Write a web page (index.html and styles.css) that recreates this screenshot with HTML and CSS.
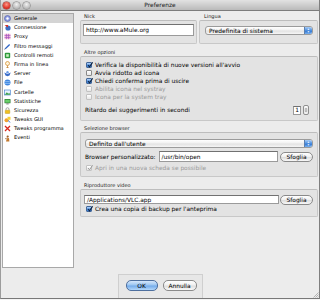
FILE: index.html
```html
<!DOCTYPE html>
<html lang="it">
<head>
<meta charset="utf-8">
<title>Preferenze</title>
<link rel="stylesheet" href="styles.css">
</head>
<body>
<div class="window">
  <div class="titlebar">
    <div class="lights"><span class="light red"></span><span class="light gray"></span><span class="light gray"></span></div>
    <div class="title">Preferenze</div>
    <div class="spacer"></div>
  </div>
  <div class="main">
    <ul class="sidebar">
      <li class="item sel"><svg viewBox="0 0 7 7"><circle cx="3.5" cy="3.5" r="3" fill="#8d9be0" stroke="#4a56a8" stroke-width=".6"/><circle cx="3.5" cy="3.5" r="1.2" fill="#fff"/></svg><span>Generale</span></li>
      <li class="item"><svg viewBox="0 0 7 7"><circle cx="4" cy="4" r="2.6" fill="#3f6fc4"/><path d="M0.5 1 L4 1 L4 3.5 Z" fill="#d8322a"/></svg><span>Connessione</span></li>
      <li class="item"><svg viewBox="0 0 7 7"><rect x="0.5" y="0.8" width="6" height="5.4" fill="#f2b5d8"/><path d="M0.5 2.5H6.5M0.5 4.5H6.5M2.5 .8V6.2M4.5 .8V6.2" stroke="#9a4fc0" stroke-width=".6"/></svg><span>Proxy</span></li>
      <li class="item"><svg viewBox="0 0 7 7"><path d="M1 6.3 L1.6 4.6 L5.2 1 L6.1 1.9 L2.5 5.5 Z" fill="#2c64c8"/><path d="M0.6 6.6 L1.6 4.9" stroke="#1a3a7a" stroke-width=".6"/></svg><span>Filtro messaggi</span></li>
      <li class="item"><svg viewBox="0 0 7 7"><rect x="0.8" y="0.8" width="5.4" height="5.4" rx="1" fill="#2f9a3c"/><rect x="2.2" y="2.2" width="2.6" height="2.6" fill="#c9f0c0"/></svg><span>Controlli remoti</span></li>
      <li class="item"><svg viewBox="0 0 7 7"><circle cx="3.5" cy="2.5" r="2" fill="#fff3d8" stroke="#d08a2a" stroke-width=".7"/><path d="M3.5 4.5V6.7M2.4 6.5H4.6" stroke="#c07a20" stroke-width=".7"/></svg><span>Firma in linea</span></li>
      <li class="item"><svg viewBox="0 0 7 7"><path d="M0.3 2.5 L3.5 4 L6.7 2.5 L5.5 5.5 L3.5 6.3 L1.5 5.5 Z" fill="#3a6cc8"/><circle cx="3.5" cy="2.2" r="1.2" fill="#6a9be6"/></svg><span>Server</span></li>
      <li class="item"><svg viewBox="0 0 7 7"><circle cx="3.5" cy="3.5" r="3" fill="#3f86e0"/><path d="M1.2 2.5C2.5 3 4 2 5.8 2.8M1 4.3C2.7 4.8 4.4 4 6 4.6" stroke="#bfe0ff" stroke-width=".6" fill="none"/></svg><span>File</span></li>
      <li class="item"><svg viewBox="0 0 7 7"><rect x="0.5" y="1" width="6" height="5" fill="#e8f2ff" stroke="#3b78c8" stroke-width=".6"/><path d="M0.8 5.7 L2.8 3.2 L4.3 4.8 L5.3 3.8 L6.2 5.7 Z" fill="#3aa04a"/></svg><span>Cartelle</span></li>
      <li class="item"><svg viewBox="0 0 7 7"><rect x="0.5" y="1" width="6" height="4.3" rx=".5" fill="#2f7d36"/><rect x="1.2" y="1.7" width="4.6" height="2.9" fill="#6ad06a"/><rect x="2.3" y="5.4" width="2.4" height="1" fill="#777"/></svg><span>Statistiche</span></li>
      <li class="item"><svg viewBox="0 0 7 7"><path d="M2 3.2V2.2A1.5 1.5 0 0 1 5 2.2V3.2" stroke="#8a8a8a" stroke-width=".7" fill="none"/><rect x="1.2" y="3.2" width="4.6" height="3.3" rx=".4" fill="#f0c020" stroke="#b08a10" stroke-width=".4"/></svg><span>Sicurezza</span></li>
      <li class="item"><svg viewBox="0 0 7 7"><circle cx="2.5" cy="4.3" r="2" fill="#f0a030"/><rect x="3.5" y="0.8" width="3" height="3" fill="#f4d23a"/><path d="M4 4.5 L6.3 6.5" stroke="#3a6cc8" stroke-width=".9"/></svg><span>Tweaks GUI</span></li>
      <li class="item"><svg viewBox="0 0 7 7"><path d="M1 1 L6 6 M6 1 L1 6" stroke="#d8281e" stroke-width="1.3"/></svg><span>Tweaks programma</span></li>
      <li class="item"><svg viewBox="0 0 7 7"><circle cx="3.7" cy="1.6" r="1.1" fill="#a0602a"/><path d="M2 6.5 L2.8 3.2 L5 3 L5.4 6.5 Z" fill="#c2792e"/><path d="M1 3.8 L2.8 3.2" stroke="#7a4520" stroke-width=".6"/></svg><span>Eventi</span></li>
    </ul>

    <div class="content">
      <div class="toprow">
        <div class="group nick">
          <div class="glabel">Nick</div>
          <div class="gbox">
            <div class="field big">http://www.aMule.org</div>
          </div>
        </div>
        <div class="group lingua">
          <div class="glabel">Lingua</div>
          <div class="gbox">
            <div class="popup"><span>Predefinita di sistema</span><span class="arrows"><svg viewBox="0 0 8 9"><path d="M2.5 3.6 L4 1.8 L5.5 3.6 Z M2.5 5.4 L4 7.2 L5.5 5.4 Z" fill="#fff"/></svg></span></div>
          </div>
        </div>
      </div>

      <div class="group altre">
        <div class="glabel">Altre opzioni</div>
        <div class="gbox">
          <div class="cbrow"><span class="cb on"><svg viewBox="0 0 6 6"><path d="M1 3 L2.5 4.8 L5.6 0.3" stroke="#0f2340" stroke-width="1.1" fill="none"/></svg></span><span>Verifica la disponibilità di nuove versioni all'avvio</span></div>
          <div class="cbrow"><span class="cb"></span><span>Avvia ridotto ad icona</span></div>
          <div class="cbrow"><span class="cb on"><svg viewBox="0 0 6 6"><path d="M1 3 L2.5 4.8 L5.6 0.3" stroke="#0f2340" stroke-width="1.1" fill="none"/></svg></span><span>Chiedi conferma prima di uscire</span></div>
          <div class="cbrow dis"><span class="cb"></span><span>Abilita icona nel systray</span></div>
          <div class="cbrow dis"><span class="cb"></span><span>Icona per la system tray</span></div>
          <div class="ritardo"><span>Ritardo dei suggerimenti in secondi</span>
            <span class="spin"><span class="spinval">1</span><span class="stepper"><svg viewBox="0 0 6 10"><path d="M1.6 4 L3 2.2 L4.4 4 Z M1.6 6 L3 7.8 L4.4 6 Z" fill="#333"/></svg></span></span>
          </div>
        </div>
      </div>

      <div class="group browser">
        <div class="glabel">Selezione browser</div>
        <div class="gbox">
          <div class="popup"><span>Definito dall'utente</span><span class="arrows"><svg viewBox="0 0 8 9"><path d="M2.5 3.6 L4 1.8 L5.5 3.6 Z M2.5 5.4 L4 7.2 L5.5 5.4 Z" fill="#fff"/></svg></span></div>
          <div class="browserrow">
            <span class="blabel">Browser personalizzato:</span>
            <div class="field mid">/usr/bin/open</div>
            <button class="btn">Sfoglia</button>
          </div>
          <div class="cbrow dis apri"><span class="cb dischk"><svg viewBox="0 0 6 6"><path d="M1 3 L2.5 4.8 L5.6 0.3" stroke="#9a9a9a" stroke-width="1" fill="none"/></svg></span><span>Apri in una nuova scheda se possibile</span></div>
        </div>
      </div>

      <div class="group video">
        <div class="glabel">Riproduttore video</div>
        <div class="gbox">
          <div class="videorow">
            <div class="field small">/Applications/VLC.app</div>
            <button class="btn">Sfoglia</button>
          </div>
          <div class="cbrow crea"><span class="cb on"><svg viewBox="0 0 6 6"><path d="M1 3 L2.5 4.8 L5.6 0.3" stroke="#0f2340" stroke-width="1.1" fill="none"/></svg></span><span>Crea una copia di backup per l'anteprima</span></div>
        </div>
      </div>
    </div>
  </div>

  <div class="footer">
    <div class="btnbox">
      <button class="btn ok">OK</button>
      <button class="btn cancel">Annulla</button>
    </div>
  </div>
  <svg class="grip" viewBox="0 0 7 7"><path d="M6.5 1.5 L1.5 6.5 M6.5 3.5 L3.5 6.5 M6.5 5.5 L5.5 6.5" stroke="#9a9a9a" stroke-width=".7"/></svg>
</div>
</body>
</html>
```

FILE: styles.css
```css
* { box-sizing: border-box; margin: 0; padding: 0; }
html, body { width: 320px; height: 300px; overflow: hidden; background: #f4f4f4; }
body { font-family: "DejaVu Sans", "Liberation Sans", sans-serif; color: #000; }

.window {
  width: 320px; height: 299px;
  background: #ececec;
  border-left: 1px solid #9c9c9c;
  border-right: 1px solid #7f7f7f;
  border-bottom: 1px solid #787878;
  display: flex; flex-direction: column;
  position: relative;
}

.titlebar {
  height: 11px; flex: none;
  display: flex; align-items: center;
  background: linear-gradient(#e2e2e2, #bababa);
  border-bottom: 1px solid #7c7c7c;
}
.lights { width: 30px; display: flex; gap: 3px; padding-left: 2px; flex: none; }
.light { width: 7px; height: 7px; border-radius: 50%; }
.light.red { background: radial-gradient(circle at 50% 35%, #ff9a8a, #d9261a 70%, #9e1208); box-shadow: 0 0 0 .5px #8a2a20; }
.light.gray { background: radial-gradient(circle at 50% 35%, #f2f2f2, #b9b9b9 70%, #8e8e8e); box-shadow: 0 0 0 .5px #7a7a7a; }
.title { flex: 1; text-align: center; font-size: 5.9px; line-height: 10px; color: #1a1a1a; }
.spacer { width: 30px; flex: none; }

.main { display: flex; padding: 2px 1px 0 1px; flex: none; }

.sidebar {
  list-style: none;
  width: 72px; height: 255px; flex: none;
  background: #fff;
  border: 1px solid #a8a8a8;
}
.item {
  height: 9.2px;
  display: flex; align-items: center; gap: 3px;
  padding-left: 1px;
  font-size: 5.1px; line-height: 9.2px;
  white-space: nowrap;
}
.item.sel { background: #d4d4d4; }
.item svg { width: 7px; height: 7px; flex: none; }

.content { margin-left: 6px; width: 238px; display: flex; flex-direction: column; }

.glabel { font-size: 5px; height: 6px; line-height: 6px; padding-left: 4px; color: #222; white-space: nowrap; }
.gbox {
  margin-top: 1px;
  background: #e3e3e3;
  border: 1px solid #c8c8c8;
  border-top-color: #bdbdbd;
  border-radius: 2px;
}

.toprow { display: flex; gap: 2px; }
.nick { width: 117px; flex: none; }
.nick .gbox { height: 24px; padding: 3px 2px; }
.lingua { flex: 1; }
.lingua .glabel { padding-left: 5px; }
.lingua .gbox { height: 24px; padding: 5px 4px 0 5px; }

.field {
  background: #fff;
  border: 1px solid #9a9a9a;
  border-top-color: #717171;
  font-size: 5.9px;
  display: flex; align-items: center;
  padding-left: 2px;
  white-space: nowrap; overflow: hidden;
}
.field.big { height: 12px; }
.field.mid { height: 11px; flex: 1; }
.field.small { height: 9px; flex: 1; }

.popup {
  height: 9px;
  display: flex; align-items: center;
  border: 1px solid #9b9b9b;
  border-radius: 3px;
  background: linear-gradient(#ffffff, #f1f1f1 45%, #e2e2e2 55%, #f6f6f6);
  font-size: 5.9px;
  padding-left: 3px;
  white-space: nowrap;
  overflow: hidden;
}
.arrows {
  margin-left: auto;
  width: 8px; height: 100%;
  background: linear-gradient(#a9cdf6, #4b8ee0 50%, #2f74d0 55%, #7bb3f0);
  border-left: 1px solid #5a7fb0;
  display: flex;
}
.arrows svg { width: 8px; height: 7px; }

.altre { margin-top: 5px; }
.altre .gbox { padding: 4px 0 5px 5px; }

.cbrow { height: 8px; display: flex; align-items: center; gap: 2px; font-size: 5.9px; white-space: nowrap; }
.cbrow.dis { color: #9a9a9a; }
.cb {
  width: 6px; height: 6px; flex: none;
  border: 1px solid #8a8a8a;
  border-radius: 1px;
  background: linear-gradient(#ffffff, #e6e6e6);
  position: relative;
  margin-right: 1px;
}
.cbrow.dis .cb { border-color: #c2c2c2; }
.cb.on { background: linear-gradient(#bcd9fa, #4d8fe0 55%, #3b7fd6); border-color: #44689a; }
.cb svg { position: absolute; left: 0; top: -1px; width: 6px; height: 6px; }

.ritardo {
  margin-top: 4px; margin-left: -1px; margin-right: 8px;
  height: 10px;
  display: flex; align-items: center;
  font-size: 5.9px; white-space: nowrap;
}
.spin { margin-left: auto; display: flex; gap: 2px; align-items: center; }
.spinval {
  width: 8px; height: 9px;
  background: #fff; border: 1px solid #9a9a9a; border-top-color: #717171;
  font-size: 5.9px; display: flex; align-items: center; justify-content: center;
}
.stepper {
  width: 6px; height: 10px;
  border: 1px solid #8f8f8f; border-radius: 2px;
  background: linear-gradient(#fff, #e0e0e0 50%, #f4f4f4);
  display: flex;
}
.stepper svg { width: 4px; height: 8px; }

.browser { margin-top: 4px; }
.browser .gbox { padding: 6px 4px 4px 4px; }
.browserrow { margin-top: 3px; height: 11px; display: flex; align-items: center; gap: 2px; }
.blabel { font-size: 5.9px; white-space: nowrap; margin-right: 1px; }
.apri { margin-top: 2px; padding-left: 1px; }
.cb.dischk { border-color: #c4c4c4; }

.video { margin-top: 5px; }
.video .gbox { padding: 5px 4px 3px 3px; }
.videorow { height: 9px; display: flex; align-items: center; gap: 1px; }
.crea { margin-top: 1px; padding-left: 2px; }

.btn {
  height: 10px;
  width: 33px; flex: none;
  border: 1px solid #8a8a8a;
  border-radius: 5px;
  background: linear-gradient(#ffffff, #f0f0f0 45%, #dedede 55%, #f8f8f8);
  font-family: "DejaVu Sans", sans-serif;
  font-size: 5.9px; color: #000;
  display: flex; align-items: center; justify-content: center;
}

.footer { margin-top: auto; display: flex; justify-content: center; }
.btnbox {
  width: 85px; height: 24px;
  background: #e7e7e7;
  border: 1px solid #cfcfcf; border-bottom: none;
  display: flex; gap: 5px;
  padding: 5px 0 0 7px;
}
.btnbox .btn { height: 11px; }
.btn.ok {
  width: 32px;
  border-color: #4e6f9e;
  background: linear-gradient(#d5e7fb, #9cc6f2 45%, #74abea 55%, #b4d8fb);
}
.btn.cancel { width: 34px; }

.grip { position: absolute; right: 0; bottom: 0; width: 7px; height: 7px; }
```
